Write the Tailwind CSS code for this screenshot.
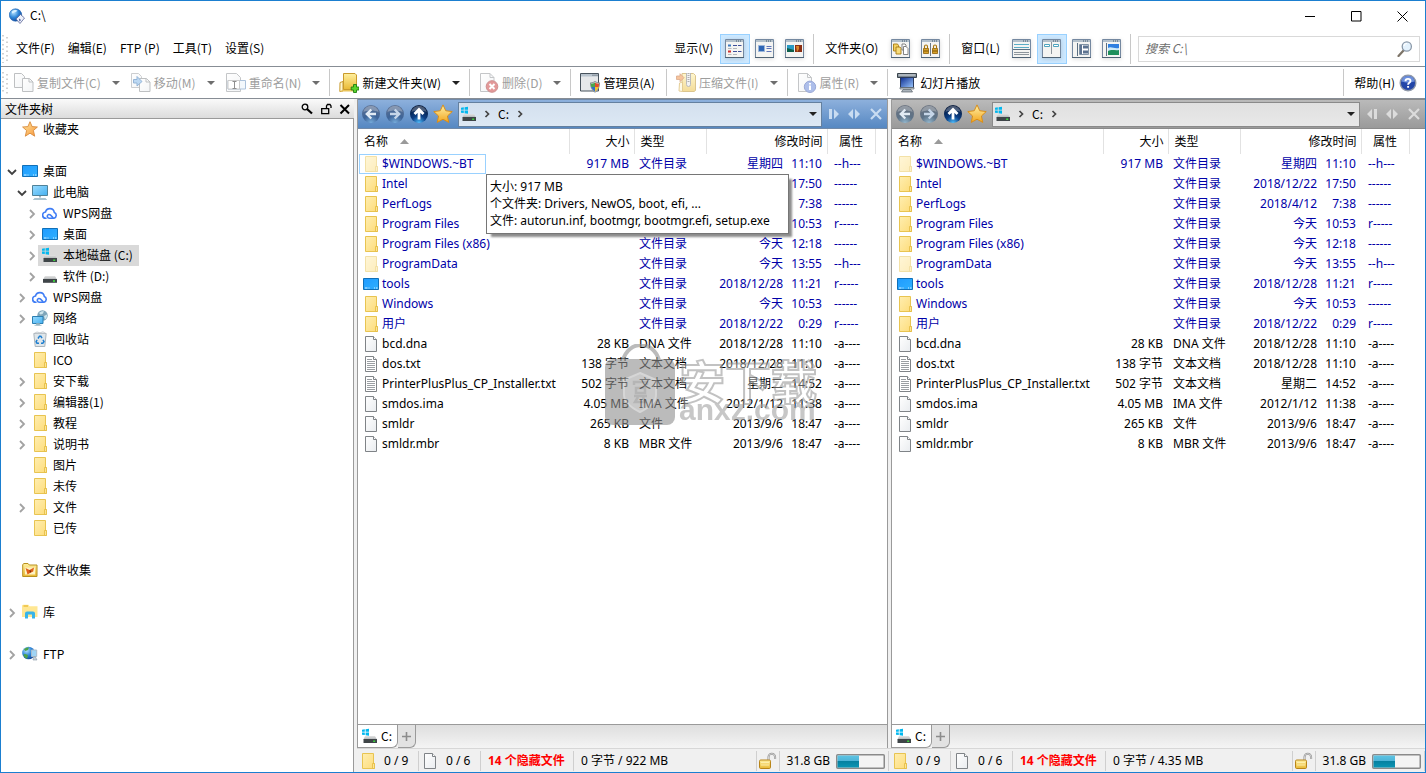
<!DOCTYPE html>
<html lang="zh-CN">
<head>
<meta charset="utf-8">
<meta name="viewport" content="width=device-width, initial-scale=1">
<title>C:\</title>
<script src="https://cdn.jsdelivr.net/npm/@tailwindcss/browser@4"></script>
</head>
<body class="flex h-screen flex-col overflow-hidden border border-[#1b7fd0] bg-white font-['Noto_Sans_CJK_SC',sans-serif] text-xs text-black">

<svg class="absolute size-0" aria-hidden="true">
  <defs>
    <linearGradient id="gFolder" x1="0" y1="0" x2="1" y2="1"><stop offset="0" stop-color="#ffeeb0"/><stop offset="1" stop-color="#fddc7a"/></linearGradient>
    <linearGradient id="gGold" x1="0" y1="0" x2="0" y2="1"><stop offset="0" stop-color="#fff0a0"/><stop offset="1" stop-color="#e9b934"/></linearGradient>
    <linearGradient id="gDesk" x1="0" y1="0" x2="1" y2="1"><stop offset="0" stop-color="#1f9bff"/><stop offset="1" stop-color="#2fb0ff"/></linearGradient>
    <linearGradient id="gScreen" x1="0" y1="0" x2="1" y2="1"><stop offset="0" stop-color="#9adcff"/><stop offset="1" stop-color="#45b0f0"/></linearGradient>
    <linearGradient id="gPaper" x1="0" y1="0" x2="1" y2="1"><stop offset="0" stop-color="#ffffff"/><stop offset="1" stop-color="#e9ecef"/></linearGradient>
    <linearGradient id="gStar" x1="0" y1="0" x2="0" y2="1"><stop offset="0" stop-color="#fff2a8"/><stop offset="1" stop-color="#f2a51e"/></linearGradient>
    <linearGradient id="gStar2" x1="0" y1="0" x2="1" y2="1"><stop offset="0" stop-color="#ffe9a0"/><stop offset="1" stop-color="#f7943a"/></linearGradient>
    <radialGradient id="gBall" cx=".5" cy="1" r=".9"><stop offset="0" stop-color="#4fc0ff"/><stop offset=".45" stop-color="#0c3f86"/><stop offset="1" stop-color="#061a3d"/></radialGradient>
    <radialGradient id="gBallOff" cx=".5" cy="1" r=".9"><stop offset="0" stop-color="#78aedd"/><stop offset=".5" stop-color="#3d6498"/><stop offset="1" stop-color="#5b7194"/></radialGradient>
    <radialGradient id="gBallGrey" cx=".5" cy="1" r=".9"><stop offset="0" stop-color="#94b8cf"/><stop offset=".5" stop-color="#5d7287"/><stop offset="1" stop-color="#6a7380"/></radialGradient>
    <radialGradient id="gGlobe" cx=".35" cy=".3" r=".8"><stop offset="0" stop-color="#b5e2ff"/><stop offset=".5" stop-color="#2f86d8"/><stop offset="1" stop-color="#0d3f90"/></radialGradient>
    <linearGradient id="gBar" x1="0" y1="0" x2="0" y2="1"><stop offset="0" stop-color="#5cc4e4"/><stop offset=".42" stop-color="#4fb5d8"/><stop offset=".45" stop-color="#067f9f"/><stop offset="1" stop-color="#0a95b4"/></linearGradient>
    <linearGradient id="gSlide" x1="0" y1="0" x2="1" y2="1"><stop offset="0" stop-color="#0c2c90"/><stop offset="1" stop-color="#9cc9ff"/></linearGradient>
    <linearGradient id="gDrive" x1="0" y1="0" x2="0" y2="1"><stop offset="0" stop-color="#e4e4e4"/><stop offset="1" stop-color="#b0b4b6"/></linearGradient>
  </defs>

  <symbol id="app" viewBox="0 0 16 16"><circle cx="6.500" cy="7" r="6.200" fill="url(#gGlobe)" stroke="#1d5fae" stroke-width=".6"/><path d="M3 3.500c2-1.800 4-1.800 5.500-1 -1 2-3.500 1.500-5.500 3z" fill="#d7f0ff"/><path d="m7 11 4.500-4.500 4 3.500-4.500 5.500z" fill="#eef2fb" stroke="#5b6698" stroke-width=".8"/><path d="m10 10.500 2 1.500-1.500 1.500z" fill="#33418e"/></symbol>

  <symbol id="folder" viewBox="0 0 16 16"><path d="M2.500.5h11v10h.9v5H2.500z" fill="url(#gFolder)" stroke="#e8c451"/><path d="M12.500 15.500v-5h1.900v5z" fill="#ffeaa0" stroke="#e3b93c" stroke-width=".8"/></symbol>
  <symbol id="desktop" viewBox="0 0 16 16"><path d="M.5 2.500h15v11H.5z" fill="url(#gDesk)" stroke="#1170b8"/><path d="M2 12h2.500M5.500 12h1M11 12h1M13 12h1.500" stroke="#d5efff" stroke-width="1"/></symbol>
  <symbol id="computer" viewBox="0 0 16 16"><path d="M.5 1.500h15v10H.5z" fill="url(#gScreen)" stroke="#4f8299"/><path d="M7 12h2v1.500H7z" fill="#9fb4bf"/><path d="M2.500 14.500h11l1 1h-13z" fill="#dfe9ef" stroke="#8eaebd" stroke-width=".7"/></symbol>
  <symbol id="cloud" viewBox="0 0 16 16"><path d="M4 13.200a3.100 3.100 0 0 1-.5-6.200A4.500 4.500 0 0 1 12.300 7.500a3 3 0 0 1-.3 5.700H7.500c-2.500 0-3-3-.8-3.700 1.500-.4 2.300.7 3.300 2l1.200 1.600" fill="none" stroke="#3f7df5" stroke-width="1.600" stroke-linecap="round"/></symbol>
  <symbol id="disk" viewBox="0 0 16 16"><path d="m3 8 10 0 2 3.500H1z" fill="url(#gDrive)"/><path d="M1 11h14v3.800H1z" fill="#3f4548"/><path d="M11 13h2" stroke="#3cf03c" stroke-width="1.300"/></symbol>
  <symbol id="windisk" viewBox="0 0 16 16"><path d="M3 8h10l2 3.500H1.500z" fill="url(#gDrive)"/><path d="M1.500 11H15v4H1.500z" fill="#3f4548"/><path d="M11.200 13.200h2" stroke="#3cf03c" stroke-width="1.300"/><path d="M0 1.700 2.800 1.300v2.500H0zM3.600 1.200 7 .7v3.100H3.600zM0 4.600h2.800v2.500L0 6.700zM3.600 4.600H7v3.100l-3.400-.5z" fill="#00b7ee"/></symbol>
  <symbol id="network" viewBox="0 0 16 16"><circle cx="10.500" cy="5.500" r="5.200" fill="#7fa6ba"/><path d="M7 3c2-2 4-2 5-1.500l-1.500 2.500-2 .5zM12 6l3-1.500c.3 2-.5 4-2 5z" fill="#cfe6ee"/><path d="M.5 6.500h10.500v7H.5z" fill="url(#gScreen)" stroke="#2b7fb2"/><path d="M4.500 13.500h3v1.200h-3zM2.500 15.300h7" fill="#8eaebd" stroke="#8eaebd" stroke-width=".8"/></symbol>
  <symbol id="bin" viewBox="0 0 16 16"><path d="M1.800 2.500h12.400l-1.400 13H3.200z" fill="#dfe6ea" stroke="#a5afb5" stroke-width=".9"/><path d="m2 2.500 3-1.500 3 .8 3-1 3 1.700z" fill="#f3f5f6" stroke="#b0b8bd" stroke-width=".7"/><path d="m6 7.500 1.500-2.300h1.300L10 7.200M11 8.800l1 1.900-1.200 1.500H9M7 12.200H5l-.9-1.500 1-1.900" fill="none" stroke="#1f7fd0" stroke-width="1.500"/></symbol>
  <symbol id="star" viewBox="0 0 18 18"><path d="m9 .8 2.500 5.300 5.800.7-4.300 4 1.200 5.800L9 13.700l-5.200 2.900L5 10.800.7 6.800l5.800-.7z" fill="url(#gStar)" stroke="#d88e1a" stroke-width=".9" stroke-linejoin="round"/></symbol>
  <symbol id="favstar" viewBox="0 0 16 16"><path d="m8 .7 2.100 4.900 5.300.4-4 3.500 1.300 5.700L8 12.200l-4.700 3 1.300-5.700L.6 6l5.300-.4z" fill="url(#gStar2)" stroke="#d98a3c" stroke-width=".9" stroke-linejoin="round"/></symbol>
  <symbol id="collect" viewBox="0 0 16 16"><path d="M.7 4V2.500L2 1.500h4l1.300 1.500H15v11.500H.7z" fill="url(#gGold)" stroke="#b8901e"/><path d="M3 5.500h10v7H3z" fill="#fdf3c4"/><path d="m3.500 6 4 2 4.500-2.500-.8 4L8 11l-2.500 1.500L4.800 10z" fill="#e0601a"/><path d="m7.500 8 2 1-1.500 2z" fill="#7a2a08"/></symbol>
  <symbol id="library" viewBox="0 0 16 16"><path d="M0 1.500 1 .8h5.500l1 1.500H15.500V13H0z" fill="#ffe793"/><path d="M1.500 2h4.500" stroke="#e8b62c" stroke-width="1.200"/><path d="M3 14.500V9.500a2 2 0 0 1 2-2h6a2 2 0 0 1 2 2v5h-3v-4H6v4z" fill="#37b4ea"/></symbol>
  <symbol id="ftp" viewBox="0 0 16 16"><circle cx="6.500" cy="7" r="6.300" fill="url(#gGlobe)"/><path d="M2 3.500c1.500-2 3.500-2.300 5-2l-1 2.500-2.500 1zM3 8l3 1-1 4C3 12 1.500 10 1.500 8.500z" fill="#4fa347"/><path d="M9.500 4h5.200v6.500H9.500z" fill="#9fd4f5" stroke="#a9bccb"/><path d="M11.500 11h2l1.500 3h-4z" fill="#c8d2da" stroke="#8899a6" stroke-width=".6"/></symbol>
  <symbol id="file" viewBox="0 0 16 16"><path d="M2.500.5h8l3 3v12h-11z" fill="url(#gPaper)" stroke="#7f8387"/><path d="M10.500.5v3h3" fill="#fff" stroke="#7f8387"/></symbol>
  <symbol id="txt" viewBox="0 0 16 16"><path d="M2.500.5h8l3 3v12h-11z" fill="#fff" stroke="#7f8387"/><path d="M10.500.5v3h3" fill="#fff" stroke="#7f8387"/><path d="M4 3.500h5M4 5.500h8M4 7.500h8M4 9.500h8M4 11.500h8M4 13.500h8" stroke="#9b9fa3"/></symbol>

  <symbol id="arrowL" viewBox="0 0 20 20"><path d="M15 10H6.500M10.300 5.500 5.800 10l4.500 4.500" fill="none" stroke="#e2ebf4" stroke-width="2.400"/></symbol>
  <symbol id="arrowR" viewBox="0 0 20 20"><path d="M5 10h8.500M9.700 5.500 14.200 10l-4.500 4.500" fill="none" stroke="#c6d6e8" stroke-width="2.400"/></symbol>
  <symbol id="arrowU" viewBox="0 0 20 20"><path d="M10 15.500V6.500M5.500 10 10 5.500 14.500 10" fill="none" stroke="#fff" stroke-width="2.800"/></symbol>

  <symbol id="copy" viewBox="0 0 20 20"><path d="M.5.5h7l3 3v11H.5z" fill="url(#gPaper)" stroke="#7f8387"/><path d="M8.500 5.500h7l3.500 3.500v9.500H8.500z" fill="url(#gPaper)" stroke="#7f8387"/><path d="M15 5.500V9h4" fill="none" stroke="#7f8387"/></symbol>
  <symbol id="move" viewBox="0 0 20 20"><path d="M.5.5h7l3 3v11H.5z" fill="url(#gPaper)" stroke="#9a9ea2"/><path d="M8.500 5.500h7l3.500 3.500v9.500H8.500z" fill="url(#gPaper)" stroke="#7f8387"/><path d="M15 5.500V9h4" fill="none" stroke="#7f8387"/><path d="M2.500 6.500h3.500v-3L11 8.500l-5 4.500v-3H2.500z" fill="#7cb2e6" stroke="#2c6cb0"/></symbol>
  <symbol id="rename" viewBox="0 0 20 20"><path d="M.5.500h10l4 4v14H.5z" fill="url(#gPaper)" stroke="#8b8f93"/><path d="M2 7.500h17.500v8.500H2z" fill="#e9f2fb" stroke="#5b86b8"/><path d="M2 7.500h11.500v8.500H2z" fill="#fff" stroke="#999"/><path d="M8.500 8.500v7M6.500 8.500h4M6.500 15.500h4" stroke="#222"/></symbol>
  <symbol id="newfolder" viewBox="0 0 20 20"><path d="M4.500.5h11.500l1.500 1.500v13l-1.500 1.500H4.500z" fill="url(#gGold)" stroke="#c99a2c"/><path d="m1 9.500 3-1v9.500L.8 18.500z" fill="#fdf6d0" stroke="#c99a2c"/><path d="M4 17h10v1.500H1z" fill="#e9c45a"/><path d="M14.500 11.500h3v2.500h2.400v3h-2.400v2.500h-3V17h-2.300v-3h2.300z" fill="#58d32b" stroke="#1f7d10" stroke-width=".9"/></symbol>
  <symbol id="delete" viewBox="0 0 20 20"><path d="M1.500.5h9.500l4 4v14h-13.500z" fill="url(#gPaper)" stroke="#8b8f93"/><path d="M11 .5v4h4" fill="none" stroke="#8b8f93"/><circle cx="13" cy="13.500" r="5.800" fill="#c93434" stroke="#9c2020"/><path d="m10.500 11 5 5M15.500 11l-5 5" stroke="#fff" stroke-width="2"/></symbol>
  <symbol id="admin" viewBox="0 0 20 20"><path d="M.5.5h18v17.500H.5z" fill="#e6e8ea" stroke="#47525c"/><path d="M1 1h17v2.500H1z" fill="#b9c4ce"/><path d="M12.500 2.200h1M14.500 2.200h1M16.500 2.200h1" stroke="#47525c"/><path d="M15 8.500c1.500 1 3 1.300 4.500 1.300 0 4.500-1.500 7.500-4.500 9.500-3-2-4.500-5-4.500-9.500 1.500 0 3-.3 4.500-1.300z" fill="#dfe6ea" stroke="#6d7478" stroke-width=".8"/><path d="M15 9.500v4.500h-3.800c-.3-1.200-.3-2-.3-3.300 1.500 0 3-.4 4.100-1.200z" fill="#4da54a"/><path d="M15 9.500c1 .8 2.500 1.200 4 1.200 0 1.300 0 2.100-.3 3.300H15z" fill="#e0502d"/><path d="M15 14v4.500c-2-1.500-3.200-2.800-3.800-4.500z" fill="#2f6fc4"/><path d="M15 14v4.500c2-1.500 3.200-2.800 3.700-4.500z" fill="#f4c12e"/></symbol>
  <symbol id="zip" viewBox="0 0 20 20"><path d="M6 .5h11.500l2 2v15l-1.500 1H6z" fill="url(#gGold)" stroke="#b98d20"/><path d="m3.500 10 3-1v9.500L3 18z" fill="#fdf6d0" stroke="#c99a2c"/><path d="M10.500 0v11.500a2 2 0 0 0 4 0V0" fill="#e8e8e8" stroke="#777"/><path d="M12.500 0v9" stroke="#666" stroke-dasharray="1 1" stroke-width="2"/><path d="M.5 3h3.500V.7l4 4-4 4V6.500H.5z" fill="#ef8a3c" stroke="#b85518" stroke-width=".8"/></symbol>
  <symbol id="props" viewBox="0 0 20 20"><path d="M1.500.5h9l4 4v14h-13z" fill="url(#gPaper)" stroke="#8b8f93"/><path d="M10.500.5v4h4" fill="none" stroke="#8b8f93"/><circle cx="13" cy="13.800" r="5.700" fill="#5d7fd6" stroke="#3553ae"/><path d="M13 12.500v4.500M13 10v1.500" stroke="#fff" stroke-width="2"/></symbol>
  <symbol id="slides" viewBox="0 0 20 20"><path d="M.5.5h19v4H.5z" fill="#7c8791" stroke="#3a444c"/><path d="M1.500 2h17" stroke="#dfe5ea"/><path d="M3.500 4.500h13v10h-13z" fill="url(#gSlide)" stroke="#2b3a5c"/><path d="M3 14.500h14v1.500H3z" fill="#cfd6db" stroke="#59636b" stroke-width=".7"/><path d="M6 16.500h8l1.500 2.500h-11z" fill="#aab3ba" stroke="#59636b" stroke-width=".7"/></symbol>
  <symbol id="help" viewBox="0 0 18 18"><circle cx="9" cy="9" r="7.800" fill="#2346a8" stroke="#8f98a8" stroke-width="1.400"/><path d="M2.500 7.500a6.600 6.600 0 0 1 13 0c-4 1.500-9 1.500-13 0z" fill="#6c8fdc"/><path d="M6.500 7.200c0-3.200 5-3 5-.2 0 1.800-2.400 1.800-2.400 3.700M9.100 12v1.800" fill="none" stroke="#fff" stroke-width="1.900"/></symbol>

  <symbol id="frame" viewBox="0 0 20 20"><path d="M.5.500h18v18H.5z" fill="#f4f4f2" stroke="#7488a0"/><path d="M1 1h17v2H1z" fill="#b3c0cb"/><path d="M11 2h1M13 2h1M15 2h1" stroke="#40566a"/><path d="M0 18.500h19" stroke="#4e6274"/></symbol>
  <symbol id="vDetails" viewBox="0 0 20 20"><use href="#frame"/><path d="M3 5.500h3v2H3z" fill="#3d7bc0"/><path d="M3 11.500h3v2H3z" fill="#cf3030"/><path d="M8 6.500h4M13 6.500h3.500M8 12.500h4M13 12.500h3.500" stroke="#3e4f9a"/><path d="M3 9.500h3.500M3 15.500h3.500M8 9.500h4M8 15.500h4" stroke="#b3b7bb"/></symbol>
  <symbol id="vTiles" viewBox="0 0 20 20"><use href="#frame"/><path d="M3.500 6.500h6v6h-6z" fill="#2f66b5" stroke="#9bb5d8"/><path d="M11.500 7.500h5M11.500 9.500h5M11.500 12.500h5" stroke="#5f74b8"/></symbol>
  <symbol id="vThumbs" viewBox="0 0 20 20"><use href="#frame"/><path d="M2 6h7v7H2z" fill="#2a9bc4"/><path d="m2 9 7 2v2H2z" fill="#0d5f4a"/><path d="M10 6h7v7h-7z" fill="#8b2f14"/><path d="M11 7h3v3l-2 3z" fill="#d9862c"/></symbol>
  <symbol id="fCopy" viewBox="0 0 20 20"><use href="#frame"/><path d="M2.500 5h4l1 1.500V12h-5z" fill="#f2d162" stroke="#a87c12" stroke-width=".9"/><path d="M5 8h4l1 1.500V15H5z" fill="#f7dc7c" stroke="#a87c12" stroke-width=".9"/><path d="M11 5h3l1 1v5h-4z" fill="#fff" stroke="#777" stroke-width=".9"/><path d="M12.500 7.500h2.500l2 2v6h-4.500z" fill="#fff" stroke="#777" stroke-width=".9"/></symbol>
  <symbol id="fLock" viewBox="0 0 20 20"><use href="#frame"/><path d="M9.500 4v13" stroke="#6b7a88"/><path d="M2.500 9.500h5v5h-5zM11.500 9.500h5v5h-5z" fill="#d9a42a" stroke="#916006" stroke-width=".8"/><path d="M3.500 9.500V7.500a1.500 1.500 0 0 1 3 0v2M12.500 9.500V7.500a1.500 1.500 0 0 1 3 0v2" fill="none" stroke="#a8760c" stroke-width="1.100"/><path d="M2.500 12h5M11.500 12h5" stroke="#7c5204"/></symbol>
  <symbol id="wSingle" viewBox="0 0 20 20"><use href="#frame"/><path d="M2 5.500h15M2 8.500h15" stroke="#5badc6"/><path d="M1 10.500h17" stroke="#5b6f82"/><path d="M2 13.500h15M2 15.500h15" stroke="#8d959c"/></symbol>
  <symbol id="wDual" viewBox="0 0 20 20"><use href="#frame"/><path d="M2.500 5.500h5v2h-5zM11.500 5.500h5v2h-5z" fill="#fff" stroke="#4ea4bf"/><path d="M9.500 3v12" stroke="#8d959c"/></symbol>
  <symbol id="wTree" viewBox="0 0 20 20"><use href="#frame"/><path d="M5.500 4v13" stroke="#5b6f82"/><path d="M7.500 5.500h9v10h-9z" fill="#fff" stroke="#8093a6"/><path d="M8 6h2v9H8zM11 6.500h5v3h-5zM11 11.500h5v3h-5z" fill="#5d7390"/></symbol>
  <symbol id="wPreview" viewBox="0 0 20 20"><use href="#frame"/><path d="M4.500 4v13" stroke="#5b6f82"/><path d="M6 5h11v11H6z" fill="#2f7fe0"/><path d="M6 9c3-2 6 1 11 0v3H6z" fill="#cdeaf8"/><path d="M6 12c4-2 7 0 11-1v5H6z" fill="#1f8f5a"/></symbol>
  <symbol id="lens" viewBox="0 0 16 16"><path d="m1.500 15 5-5.500" stroke="#7d7468" stroke-width="2.200" stroke-linecap="round"/><circle cx="9.800" cy="5.500" r="4.600" fill="#e4f2fd" stroke="#8a98a8" stroke-width="1.300"/><path d="M7 5a3 3 0 0 1 3-2.500" stroke="#fff" fill="none" stroke-width="1.200"/></symbol>
  <symbol id="openlock" viewBox="0 0 18 18"><path d="M9.500 8V5a3.300 3.300 0 0 1 6.600 0v2" fill="none" stroke="#8e8e8e" stroke-width="2"/><path d="M9.500 8V5a3.300 3.300 0 0 1 6.600 0v2" fill="none" stroke="#e2e2e2" stroke-width=".8"/><rect x=".5" y="8" width="11" height="8.500" rx="1.200" fill="url(#gGold)" stroke="#b98518"/><path d="M2 10.500h8M2 13h8" stroke="#fff3b8" stroke-width=".8"/></symbol>
</svg>

<header class="flex h-[30px] shrink-0 items-center">
  <svg class="ml-2 size-4"><use href="#app"/></svg>
  <h1 class="ml-[5px] pb-0.5">C:\</h1>
  <div class="ml-auto flex h-full">
    <button class="flex w-[46px] items-center justify-center" aria-label="最小化"><svg class="size-[11px]" viewBox="0 0 11 11"><path d="M0 5.500h10" stroke="#000"/></svg></button>
    <button class="flex w-[46px] items-center justify-center" aria-label="最大化"><svg class="size-[11px]" viewBox="0 0 11 11"><path d="M.5.5h9.500v9.500H.5z" fill="none" stroke="#000"/></svg></button>
    <button class="flex w-[46px] items-center justify-center" aria-label="关闭"><svg class="size-[11px]" viewBox="0 0 11 11"><path d="m.5.5 10 10M10.500.5l-10 10" stroke="#000"/></svg></button>
  </div>
</header>

<nav class="flex h-9 shrink-0 items-center border-b border-[#878d95]">
  <svg class="ml-px h-7 w-[6px]" viewBox="0 0 6 28"><path d="M1 0v28M5 2v26" stroke="#c2c2c2" stroke-width="1.500" stroke-dasharray="1.500 3"/></svg>
  <div class="flex gap-[13px] pb-0.5 pl-2">
    <button>文件(F)</button><button>编辑(E)</button><button>FTP (P)</button><button>工具(T)</button><button>设置(S)</button>
  </div>
  <div class="ml-auto flex h-full items-center pr-[5px]">
    <span class="mr-[7px] pb-0.5">显示(V)</span>
    <button class="flex size-[30px] items-center justify-center border border-[#99d1ff] bg-[#cce8ff]" aria-label="详细信息"><svg class="size-5 drop-shadow-sm"><use href="#vDetails"/></svg></button>
    <button class="flex size-[30px] items-center justify-center" aria-label="平铺"><svg class="size-5 drop-shadow-sm"><use href="#vTiles"/></svg></button>
    <button class="flex size-[30px] items-center justify-center" aria-label="缩略图"><svg class="size-5 drop-shadow-sm"><use href="#vThumbs"/></svg></button>
    <i class="ml-[3px] mr-[11px] h-[30px] w-px bg-[#c8c8c8]"></i>
    <span class="mr-2 pb-0.5">文件夹(O)</span>
    <button class="flex size-[30px] items-center justify-center" aria-label="复制文件夹"><svg class="size-5 drop-shadow-sm"><use href="#fCopy"/></svg></button>
    <button class="flex size-[30px] items-center justify-center" aria-label="锁定文件夹"><svg class="size-5 drop-shadow-sm"><use href="#fLock"/></svg></button>
    <i class="ml-[3px] mr-[11px] h-[30px] w-px bg-[#c8c8c8]"></i>
    <span class="mr-[7px] pb-0.5">窗口(L)</span>
    <button class="flex size-[30px] items-center justify-center" aria-label="单窗口"><svg class="size-5 drop-shadow-sm"><use href="#wSingle"/></svg></button>
    <button class="flex size-[30px] items-center justify-center border border-[#99d1ff] bg-[#cce8ff]" aria-label="双窗口"><svg class="size-5 drop-shadow-sm"><use href="#wDual"/></svg></button>
    <button class="flex size-[30px] items-center justify-center" aria-label="文件夹树"><svg class="size-5 drop-shadow-sm"><use href="#wTree"/></svg></button>
    <button class="flex size-[30px] items-center justify-center" aria-label="预览"><svg class="size-5 drop-shadow-sm"><use href="#wPreview"/></svg></button>
    <i class="ml-[3px] mr-[7px] h-[30px] w-px bg-[#c8c8c8]"></i>
    <label class="flex h-[26px] w-[282px] items-center border border-[#d9d9d9] px-[6px]">
      <input type="search" aria-label="搜索" placeholder="搜索 C:\" class="min-w-0 flex-1 pb-0.5 italic outline-none placeholder:text-[#6d6d6d]">
      <svg class="size-4"><use href="#lens"/></svg>
    </label>
  </div>
</nav>

<div id="toolbar" class="flex h-8 shrink-0 items-center border-b border-[#878d95]" role="toolbar"></div>

<main class="flex min-h-0 flex-1 bg-[#f0f0f0]">
  <aside class="flex w-[353px] shrink-0 flex-col">
    <div class="flex h-5 shrink-0 items-center border-b border-[#9a9a9a] bg-linear-to-b from-[#fafafa] to-[#dcdcdc] pl-1 pr-[3px]">
      <h2>文件夹树</h2>
      <div class="ml-auto flex gap-[7px]">
        <button aria-label="查找"><svg class="size-3" viewBox="0 0 12 12"><circle cx="4" cy="4" r="2.800" fill="none" stroke="#000" stroke-width="1.300"/><path d="m6 6 5 4.500" stroke="#000" stroke-width="2.200"/></svg></button>
        <button aria-label="锁定"><svg class="size-3" viewBox="0 0 12 12"><path d="M1.700 5.700h7v5h-7zM6.500 5.500v-2.500h0l1-1.500h2.500l1 1.500v2" fill="none" stroke="#000" stroke-width="1.300"/></svg></button>
        <button aria-label="关闭文件夹树"><svg class="size-3" viewBox="0 0 12 12"><path d="m1.500 2 8.500 8.500M10 2l-8.500 8.500" stroke="#000" stroke-width="2"/></svg></button>
      </div>
    </div>
    <ul id="tree" class="min-h-0 flex-1 overflow-hidden border-r border-[#9a9a9a] bg-white" role="tree"></ul>
  </aside>

  <div class="ml-[3px] flex min-w-0 flex-1 flex-col">
    <div class="grid min-h-0 flex-1 grid-cols-[531fr_534fr] gap-[3px]">
      <section id="pane1" class="relative flex min-w-0 flex-col border-x border-[#9a9a9a]"></section>
      <section id="pane2" class="relative flex min-w-0 flex-col border-l border-[#9a9a9a]"></section>
    </div>
    <footer class="grid h-6 shrink-0 grid-cols-[532fr_536fr] border-t border-[#d7d7d7] pt-px font-['Noto_Sans','Noto_Sans_CJK_SC',sans-serif]" id="status"></footer>
  </div>
</main>

<template id="overlay">
  <div role="tooltip" class="absolute left-[128px] top-[75px] whitespace-nowrap border border-[#767676] bg-white pb-1 pl-[3px] pr-[18px] pt-[3px] leading-[17px] font-['Noto_Sans','Noto_Sans_CJK_SC',sans-serif] shadow-[4px_4px_2px_-1px_rgba(0,0,0,0.45)]">
    <p>大小: 917 MB</p><p>个文件夹: Drivers, NewOS, boot, efi, ...</p><p>文件: autorun.inf, bootmgr, bootmgr.efi, setup.exe</p>
  </div>
  <div class="pointer-events-none absolute left-[247px] top-[245px] flex opacity-60">
    <svg class="h-[82px] w-[71px]" viewBox="0 0 71 82"><path d="M18 16C24-4 48-4 54 16" fill="none" stroke="#8f8f8f" stroke-width="4"/><rect y="15" width="70" height="66" rx="8" fill="#8f8f8f"/><path d="m35 29 16 7v15c0 8-8 13-16 17-8-4-16-9-16-17V36z" fill="#a6a6a6" stroke="#bcbcbc" stroke-width="2"/><path d="M29 41v-3h13v3M31 44h9v5h-9zM29 52h13M33 53l-3 5h10l-2-5" fill="none" stroke="#858585" stroke-width="2.500"/></svg>
    <div class="pl-[3px] pt-3">
      <p class="text-[46px] font-bold leading-[46px] text-white/60 [-webkit-text-stroke:2px_#9a9a9a]">安下载</p>
      <p class="-mt-2 font-['Liberation_Sans',sans-serif] text-[30px] font-bold leading-8 text-[#a3a3a3]">anxz.com</p>
    </div>
  </div>
</template>

<script>
const icon = (id, cls) => `<svg class="${cls}" aria-hidden="true"><use href="#${id}"/></svg>`;

/* Toolbar: [icon, label, has menu, disabled], null draws a separator */
const tools = [
  ['copy', '复制文件(C)', 1, 1], ['move', '移动(M)', 1, 1], ['rename', '重命名(N)', 1, 1], null,
  ['newfolder', '新建文件夹(W)', 1, 0], null, ['delete', '删除(D)', 1, 1], null, ['admin', '管理员(A)', 0, 0], null,
  ['zip', '压缩文件(I)', 1, 1], null, ['props', '属性(R)', 1, 1], null, ['slides', '幻灯片播放', 0, 0]];
const sep = '<i class="h-[27px] w-px shrink-0 bg-[#c8c8c8]"></i>';
document.getElementById('toolbar').innerHTML =
  '<svg class="ml-px h-[22px] w-[6px]" viewBox="0 0 6 22"><path d="M1 0v22M5 2v20" stroke="#c2c2c2" stroke-width="1.500" stroke-dasharray="1.500 3"/></svg><div class="flex items-center pl-[6px]">' +
  tools.map((t, i) => {
    if (!t) return sep;
    const afterSep = i > 0 && !tools[i - 1];
    return `<button class="flex items-center gap-[3px] whitespace-nowrap ${afterSep ? 'pl-[9px]' : ''} ${t[3] ? 'text-[#9d9d9d]' : ''} ${t[2] ? '' : 'pr-[11px]'}">
      ${icon(t[0], t[3] ? 'size-5 opacity-50' : 'size-5')}<span>${t[1]}</span>
      ${t[2] ? `<svg class="${tools[i + 1] ? 'ml-2 mr-[11px]' : 'ml-2 mr-[9px]'} h-1 w-2" viewBox="0 0 8 4"><path d="M0 0h8L4 4z" fill="${t[3] ? '#6e6e6e' : '#222'}"/></svg>` : ''}</button>`;
  }).join('') + '</div><div class="ml-auto flex items-center">' + sep +
  `<button class="flex items-center gap-1 pl-[10px] pr-2">帮助(H)${icon('help', 'size-[18px]')}</button></div>`;

/* Folder tree: [level, expander, icon, label, selected], null leaves an empty line */
const tree = [
  [0, '', 'favstar', '收藏夹'], null, [0, 'v', 'desktop', '桌面'], [1, 'v', 'computer', '此电脑'],
  [2, '>', 'cloud', 'WPS网盘'], [2, '>', 'desktop', '桌面'], [2, '>', 'windisk', '本地磁盘 (C:)', 1], [2, '>', 'disk', '软件 (D:)'],
  [1, '>', 'cloud', 'WPS网盘'], [1, '>', 'network', '网络'], [1, '', 'bin', '回收站'], [1, '', 'folder', 'ICO'],
  [1, '>', 'folder', '安下载'], [1, '>', 'folder', '编辑器(1)'], [1, '>', 'folder', '教程'], [1, '>', 'folder', '说明书'],
  [1, '', 'folder', '图片'], [1, '', 'folder', '未传'], [1, '>', 'folder', '文件'], [1, '', 'folder', '已传'], null,
  [0, '', 'collect', '文件收集'], null, [0, '>', 'library', '库'], null, [0, '>', 'ftp', 'FTP']];
const indent = ['pl-[6px]', 'pl-4', 'pl-[26px]'];
const expander = {
  '': '',
  'v': '<path d="m1 3 4 4 4-4" fill="none" stroke="#404040" stroke-width="1.800"/>',
  '>': '<path d="m3 1 4 4-4 4" fill="none" stroke="#a2a2a2" stroke-width="1.800"/>'};
document.getElementById('tree').innerHTML = tree.map(t => t
  ? `<li role="treeitem" class="flex h-[21px] items-center ${indent[t[0]]}"><svg class="mr-px size-[10px]" viewBox="0 0 10 10">${expander[t[1]]}</svg>
     <span class="flex h-[21px] items-center gap-[5px] pb-px pl-1 pr-[6px] ${t[4] ? 'bg-[#d9d9d9]' : ''}">${icon(t[2], 'size-4')}${t[3]}</span></li>`
  : '<li class="h-[21px]" role="none"></li>').join('');

/* Files: [icon, name, size, type, date, time, attributes] */
const files = [
  ['folder', '$WINDOWS.~BT', '917 MB', '文件目录', '星期四', '11:10', '--h---'],
  ['folder', 'Intel', '', '文件目录', '2018/12/22', '17:50', '------'],
  ['folder', 'PerfLogs', '', '文件目录', '2018/4/12', '7:38', '------'],
  ['folder', 'Program Files', '', '文件目录', '今天', '10:53', 'r-----'],
  ['folder', 'Program Files (x86)', '', '文件目录', '今天', '12:18', '------'],
  ['folder', 'ProgramData', '', '文件目录', '今天', '13:55', '--h---'],
  ['desktop', 'tools', '', '文件目录', '2018/12/28', '11:21', 'r-----'],
  ['folder', 'Windows', '', '文件目录', '今天', '10:53', '------'],
  ['folder', '用户', '', '文件目录', '2018/12/22', '0:29', 'r-----'],
  ['file', 'bcd.dna', '28 KB', 'DNA 文件', '2018/12/28', '11:10', '-a----'],
  ['txt', 'dos.txt', '138 字节', '文本文档', '2018/12/28', '11:10', '-a----'],
  ['txt', 'PrinterPlusPlus_CP_Installer.txt', '502 字节', '文本文档', '星期二', '14:52', '-a----'],
  ['file', 'smdos.ima', '4.05 MB', 'IMA 文件', '2012/1/12', '11:38', '-a----'],
  ['file', 'smldr', '265 KB', '文件', '2013/9/6', '18:47', '-a----'],
  ['file', 'smldr.mbr', '8 KB', 'MBR 文件', '2013/9/6', '18:47', '-a----']];

const ball = (fill, arrow, label) => `<button aria-label="${label}"><svg class="size-5" viewBox="0 0 20 20"><circle cx="10" cy="10" r="9" fill="url(#${fill})"/><path d="M2.500 8a7.600 7.600 0 0 1 15 0c-4-2-11-2-15 0z" fill="#fff" fill-opacity=".28"/><use href="#${arrow}"/></svg></button>`;
const crumb = '<svg class="size-2" viewBox="0 0 8 8"><path d="m2.500 1 3 3-3 3" fill="none" stroke="#444" stroke-width="1.700"/></svg>';

function pane(active) {
  const off = active ? 'gBallOff' : 'gBallGrey';
  const side = active
    ? '<path d="M1 1h3v10H1zM6 1l5 5-5 5z" fill="#c9dcf1"/>'
    : '<path d="M8 1h3v10H8zM6 1 1 6l5 5z" fill="#dcdcdc"/>';
  const tint = active ? '#c9dcf1' : '#dcdcdc';
  return `
  <div class="flex h-[30px] shrink-0 items-center border-y pl-[3px] ${active ? 'border-[#7189a8] bg-linear-to-b from-[#8db0dc] to-[#5688c2]' : 'border-[#8a8a8a] bg-linear-to-b from-[#bababa] to-[#9a9a9a]'}">
    <div class="flex items-center gap-1">${ball(off, 'arrowL', '后退')}${ball(off, 'arrowR', '前进')}${ball('gBall', 'arrowU', '向上')}
      <button aria-label="收藏">${icon('star', 'size-5')}</button></div>
    <div class="ml-[5px] flex h-[25px] min-w-0 flex-1 items-center border pl-[2px] pr-1 ${active ? 'border-[#64809f] bg-linear-to-b from-[#d3e0ee] to-[#dde8f4]' : 'border-[#8a8a8a] bg-linear-to-b from-[#e0e0e0] to-[#e8e8e8]'}">
      ${icon('windisk', 'size-4')}<span class="ml-[6px] flex items-center gap-[7px]">${crumb}<a href="#">C:</a>${crumb}</span>
      <button class="ml-auto" aria-label="历史记录"><svg class="h-1 w-2" viewBox="0 0 8 4"><path d="M0 0h8L4 4z" fill="#222"/></svg></button>
    </div>
    <div class="flex w-[65px] shrink-0 items-center gap-2 pl-[6px]">
      <button aria-label="切换面板"><svg class="size-3" viewBox="0 0 12 12">${side}</svg></button>
      <button aria-label="交换面板"><svg class="size-3" viewBox="0 0 12 12"><path d="M5 1 0 6l5 5zM7 1l5 5-5 5z" fill="${tint}"/></svg></button>
      <button class="ml-[2px]" aria-label="关闭面板"><svg class="size-3" viewBox="0 0 12 12"><path d="m1 1 10 10M11 1 1 11" stroke="${tint}" stroke-width="2.200"/></svg></button>
    </div>
  </div>
  <div class="min-h-0 flex-1 overflow-hidden bg-white">
    <table class="w-full table-fixed font-['Noto_Sans','Noto_Sans_CJK_SC',sans-serif] whitespace-nowrap">
      <colgroup><col class="w-[211px]"><col class="w-[65px]"><col class="w-[72px]"><col class="w-[121px]"><col class="w-[48px]"><col></colgroup>
      <thead><tr class="h-[25px] text-left">
        <th class="border-r border-[#e2e2e2] p-0 pl-[6px] font-normal"><span class="flex items-center gap-3">名称<svg class="h-[5px] w-[9px]" viewBox="0 0 9 5"><path d="M0 5h9L4.500 0z" fill="#9a9a9a"/></svg></span></th>
        <th class="border-r border-[#e2e2e2] p-0 pr-1 text-right font-normal">大小</th>
        <th class="border-r border-[#e2e2e2] p-0 pl-[6px] font-normal">类型</th>
        <th class="border-r border-[#e2e2e2] p-0 pr-1 text-right font-normal">修改时间</th>
        <th class="border-r border-[#e2e2e2] p-0 text-center font-normal">属性</th><th></th></tr></thead>
      <tbody>${files.map((f, i) => `<tr class="h-5 ${i < 9 ? 'text-[#0000a8]' : ''}">
        <td class="p-0 pl-px"><span class="inline-flex h-5 items-center gap-[3px] border pl-[3px] pr-[11px] align-top ${active && i === 0 ? 'border-[#99d1ff]' : 'border-transparent'}">${icon(f[0], f[6] === '--h---' ? 'size-4 opacity-50' : 'size-4')}${f[1]}</span></td>
        <td class="p-0 pr-[5px] text-right">${f[2]}</td><td class="p-0 pl-[5px]">${f[3]}</td>
        <td class="p-0 pr-[5px] text-right">${f[4]}<span class="inline-block w-[39px]">${f[5]}</span></td>
        <td class="p-0 pl-[7px]">${f[6]}</td><td></td></tr>`).join('')}</tbody>
    </table>
  </div>
  <div class="flex h-6 shrink-0 items-start border-t border-[#9a9a9a] bg-linear-to-b from-[#dedede] to-[#f4f4f4]">
    <button class="flex h-[23px] w-10 items-center gap-[3px] rounded-br-md border-b border-r border-[#9a9a9a] bg-white pl-1">${icon('windisk', 'size-4')}C:</button>
    <button class="flex h-[23px] w-[18px] items-center justify-center rounded-br-md border-b border-r border-[#9a9a9a] bg-[#e2e2e2]" aria-label="新建标签"><svg class="size-[9px]" viewBox="0 0 9 9"><path d="M4.500 0v9M0 4.500h9" stroke="#8c8c8c" stroke-width="1.600"/></svg></button>
  </div>`;
}
document.getElementById('pane1').innerHTML = pane(true);
document.getElementById('pane2').innerHTML = pane(false);
document.getElementById('pane1').append(document.getElementById('overlay').content.cloneNode(true));

const status = total => `<div class="flex min-w-0 items-center whitespace-nowrap">
  <span class="flex h-5 w-[61px] items-center gap-2 pl-[3px]">${icon('folder', 'size-4')}0 / 9</span><i class="h-5 w-px bg-[#cfcfcf]"></i>
  <span class="flex h-5 w-[61px] items-center gap-2 pl-[3px]">${icon('file', 'size-4')}0 / 6</span><i class="h-5 w-px bg-[#cfcfcf]"></i>
  <span class="w-[92px] pl-[7px] font-bold text-[#ff0000]">14 个隐藏文件</span><i class="h-5 w-px bg-[#cfcfcf]"></i>
  <span class="pl-[7px]">${total}</span>
  <i class="ml-auto h-5 w-px bg-[#cfcfcf]"></i>${icon('openlock', 'mx-[2px] size-[18px]')}<i class="h-5 w-px bg-[#cfcfcf]"></i>
  <span class="pl-[7px] pr-[6px]">31.8 GB</span>
  <svg class="mr-[3px] h-[15px] w-[49px]" viewBox="0 0 49 15" role="img" aria-label="已用空间"><rect x=".75" y=".75" width="47.500" height="13.500" rx="1" fill="#f4f4f4" stroke="#8a8a8a" stroke-width="1.500"/><path d="M1.500 1.500h21.500v12H1.500z" fill="url(#gBar)"/></svg>
  <i class="h-5 w-px bg-[#cfcfcf]"></i></div>`;
document.getElementById('status').innerHTML = status('0 字节 / 922 MB') + status('0 字节 / 4.35 MB');
</script>
</body>
</html>
